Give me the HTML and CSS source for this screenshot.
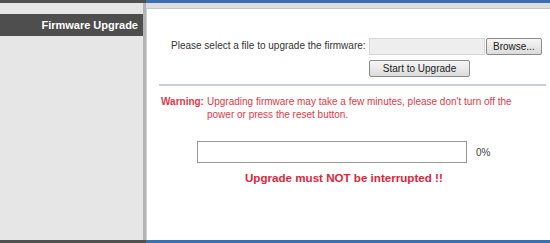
FILE: index.html
```html
<!DOCTYPE html>
<html lang="en">
<head>
    <meta charset="UTF-8">
    <title>Firmware Upgrade</title>
    <link rel="stylesheet" href="styles.css">
</head>
<body>
    <div class="strip">
        <div class="strip-left"></div>
        <div class="strip-right"></div>
    </div>
    <div class="page">
        <div class="side">
            <div class="side-title">Firmware Upgrade</div>
        </div>
        <div class="main">
            <!-- Selección de archivo -->
            <div class="file-row">
                <span class="file-label">Please select a file to upgrade the firmware:</span>
                <div class="file-controls">
                    <div class="file-line">
                        <input type="text" class="file-box" readonly>
                        <button class="btn">Browse...</button>
                    </div>
                    <button class="btn btn-start">Start to Upgrade</button>
                </div>
            </div>
            <hr class="divider">
            <div class="warning">
                <span class="warning-label">Warning:</span>
                <span class="warning-text">Upgrading firmware may take a few minutes, please don't turn off the power or press the reset button.</span>
            </div>
            <div class="progress-row">
                <div class="progress-box"></div>
                <span class="progress-value">0%</span>
            </div>
            <div class="notice">Upgrade must NOT be interrupted !!</div>
        </div>
    </div>
    <div class="strip">
        <div class="strip-left"></div>
        <div class="strip-right"></div>
    </div>
</body>
</html>
```

FILE: styles.css
```css
body {
    margin: 0;
    padding: 0;
    width: 550px;
    height: 243px;
    overflow: hidden;
    font-family: "Liberation Sans", Arial, sans-serif;
    background-color: #fff;
}
.strip {
    display: flex;
    height: 3px;
}
.strip-left {
    width: 146px;
    background-color: #505050;
}
.strip-right {
    flex: 1;
    background-color: #3b6fb3;
}
.page {
    display: flex;
    height: 237px;
    background-color: #dedede;
}
.side {
    flex-shrink: 0;
    width: 143px;
    padding-top: 11px;
    background-color: #e6e6e6;
    border-right: 3px solid #b4b4b4;
}
.side-title {
    height: 22px;
    line-height: 22px;
    background-color: #4e4e4e;
    color: #fff;
    font-weight: bold;
    font-size: 11px;
    text-align: right;
    padding-right: 5px;
}
.main {
    flex: 1;
    min-width: 0;
    margin-top: 5px;
    background-color: #fff;
    border-top: 1px solid #c4c4c4;
    border-left: 1px solid #d0d0d0;
    padding: 29px 4px 0 12px;
    font-size: 10px;
}
.file-row {
    display: flex;
    align-items: flex-start;
}
.file-label {
    flex-shrink: 0;
    width: 198px;
    padding-left: 12px;
    padding-top: 2px;
    color: #333;
}
.file-controls {
    display: flex;
    flex-direction: column;
    gap: 5px;
}
.file-line {
    display: flex;
    gap: 1px;
}
.file-box {
    width: 114px;
    height: 15px;
    padding: 0;
    border: 1px solid #d6d6d6;
    background-color: #eeeeee;
}
.btn {
    height: 17px;
    padding: 0 6px;
    font-family: "Liberation Sans", Arial, sans-serif;
    font-size: 10px;
    color: #222;
    background: linear-gradient(#f6f6f6, #dcdcdc);
    border: 1px solid #8a8a8a;
    border-radius: 2px;
}
.btn-start {
    width: 101px;
}
.divider {
    margin: 7px 0 0 0;
    border: none;
    border-top: 2px solid #cdcde0;
}
.warning {
    display: flex;
    margin-top: 9px;
    padding-left: 2px;
    color: #e03a4a;
    line-height: 13px;
}
.warning-label {
    font-weight: bold;
    margin-right: 3px;
}
.warning-text {
    width: 315px;
}
.progress-row {
    display: flex;
    align-items: center;
    margin-top: 20px;
    padding-left: 38px;
}
.progress-box {
    width: 268px;
    height: 20px;
    border: 1px solid #999;
}
.progress-value {
    margin-left: 9px;
    color: #444;
}
.notice {
    margin-top: 8px;
    padding-left: 86px;
    color: #e0253a;
    font-weight: bold;
    font-size: 11.6px;
}
```
